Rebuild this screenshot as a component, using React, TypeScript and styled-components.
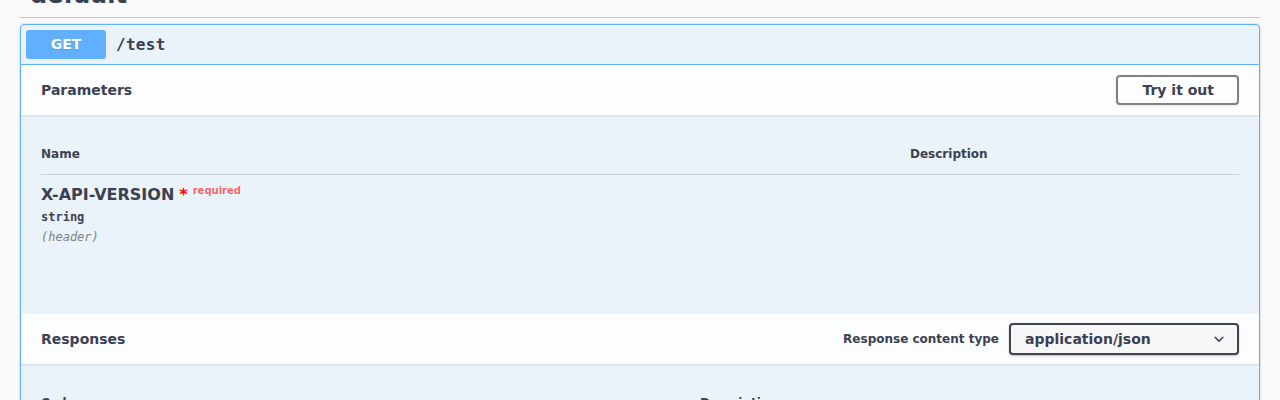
import React from "react";
import styled, { createGlobalStyle } from "styled-components";

const GlobalStyle = createGlobalStyle`
  html, body {
    margin: 0;
    padding: 0;
    background: #fafafa;
    overflow: hidden;
  }
  body {
    font-family: "DejaVu Sans", sans-serif;
    color: #3b4151;
  }
`;

const Wrapper = styled.div`
  padding: 0 20px;
  margin-top: -30px;
`;

const TagHeading = styled.h3`
  margin: 0 0 6px;
  padding: 10px 20px 7px 10px;
  font-size: 24px;
  line-height: 30px;
  font-weight: 700;
  color: #3b4151;
  border-bottom: 1px solid rgba(59, 65, 81, 0.3);
`;

const Opblock = styled.div`
  border: 1px solid #61affe;
  border-radius: 4px;
  background: rgba(97, 175, 254, 0.1);
  box-shadow: 0 0 3px rgba(0, 0, 0, 0.19);
  margin-bottom: 15px;
`;

const Summary = styled.div`
  display: flex;
  align-items: center;
  padding: 5px;
  border-bottom: 1px solid #61affe;
`;

const Method = styled.span`
  min-width: 80px;
  padding: 6px 0;
  border-radius: 3px;
  background: #61affe;
  color: #fff;
  font-size: 14px;
  line-height: 17px;
  font-weight: 700;
  text-align: center;
  text-shadow: 0 1px 0 rgba(0, 0, 0, 0.1);
`;

const Path = styled.span`
  padding: 0 10px;
  font-family: "DejaVu Sans Mono", monospace;
  font-size: 16px;
  font-weight: 700;
  letter-spacing: 0.3px;
  color: #3b4151;
`;

const SectionHeader = styled.div`
  display: flex;
  align-items: center;
  justify-content: space-between;
  min-height: 50px;
  box-sizing: border-box;
  padding: 8px 20px;
  background: rgba(255, 255, 255, 0.8);
  box-shadow: 0 1px 2px rgba(0, 0, 0, 0.1);
`;

const SectionTitle = styled.h4`
  margin: 0;
  font-size: 14px;
  font-weight: 700;
  color: #3b4151;
`;

const TryButton = styled.button`
  font-family: "DejaVu Sans", sans-serif;
  font-size: 14px;
  font-weight: 700;
  color: #3b4151;
  background: transparent;
  border: 2px solid gray;
  border-radius: 4px;
  padding: 5px 23px 5px 24px;
  box-shadow: 0 1px 2px rgba(0, 0, 0, 0.1);
`;

const TableWrap = styled.div<{ $bottom: number }>`
  padding: 20px 20px ${(p) => p.$bottom}px;
`;

const HeadRow = styled.div<{ $first: number }>`
  display: grid;
  grid-template-columns: ${(p) => p.$first}px 1fr;
  border-bottom: 1px solid rgba(59, 65, 81, 0.2);
`;

const HeadCell = styled.div`
  padding: 12px 0;
  font-size: 12px;
  line-height: 15px;
  font-weight: 700;
  color: #3b4151;
`;

const ParamRow = styled.div`
  display: grid;
  grid-template-columns: 869px 1fr;
  padding-top: 10px;
`;

const ParamName = styled.div`
  font-size: 16px;
  line-height: 19px;
  font-weight: 700;
  color: #3b4151;
`;

const Star = styled.span`
  color: red;
  padding-left: 5px;
`;

const Required = styled.span`
  color: rgba(255, 0, 0, 0.6);
  font-size: 10px;
  font-weight: 700;
  padding: 5px;
  position: relative;
  top: -6px;
`;

const ParamType = styled.div`
  padding: 4px 0 0;
  font-family: "DejaVu Sans Mono", monospace;
  font-size: 12px;
  line-height: 15px;
  font-weight: 600;
  color: #3b4151;
`;

const ParamIn = styled.div`
  padding-top: 5px;
  font-family: "DejaVu Sans Mono", monospace;
  font-size: 12px;
  line-height: 15px;
  font-style: italic;
  color: gray;
`;

const ContentType = styled.div`
  display: flex;
  align-items: center;
  gap: 10px;
`;

const Label = styled.span`
  font-size: 12px;
  font-weight: 700;
  color: #3b4151;
`;

const Select = styled.div`
  display: flex;
  align-items: center;
  justify-content: space-between;
  width: 230px;
  height: 32px;
  box-sizing: border-box;
  padding: 0 14px;
  background: #f7f7f7;
  border: 2px solid #41444e;
  border-radius: 4px;
  box-shadow: 0 1px 2px 0 rgba(0, 0, 0, 0.25);
  font-size: 14px;
  font-weight: 700;
  color: #3b4151;
`;

const Chevron = () => (
  <svg width="20" height="20" viewBox="0 0 20 20" style={{ marginRight: -6 }}>
    <path
      fill="#3b4151"
      d="M13.418 7.859a.695.695 0 01.978 0 .68.68 0 010 .969l-3.908 3.83a.697.697 0 01-.979 0l-3.908-3.83a.68.68 0 010-.969.695.695 0 01.978 0L10 11l3.418-3.141z"
    />
  </svg>
);

export default function App() {
  return (
    <Wrapper>
      <GlobalStyle />
      <TagHeading>default</TagHeading>
      <Opblock>
        <Summary>
          <Method>GET</Method>
          <Path>/test</Path>
        </Summary>

        <SectionHeader>
          <SectionTitle>Parameters</SectionTitle>
          <TryButton>Try it out</TryButton>
        </SectionHeader>

        <TableWrap $bottom={69}>
          <HeadRow $first={869}>
            <HeadCell>Name</HeadCell>
            <HeadCell>Description</HeadCell>
          </HeadRow>
          <ParamRow>
            <div>
              <ParamName>
                X-API-VERSION<Star>*</Star>
                <Required>required</Required>
              </ParamName>
              <ParamType>string</ParamType>
              <ParamIn>(header)</ParamIn>
            </div>
            <div />
          </ParamRow>
        </TableWrap>

        <SectionHeader>
          <SectionTitle>Responses</SectionTitle>
          <ContentType>
            <Label>Response content type</Label>
            <Select>
              <span>application/json</span>
              <Chevron />
            </Select>
          </ContentType>
        </SectionHeader>

        <TableWrap $bottom={20}>
          <HeadRow $first={659}>
            <HeadCell>Code</HeadCell>
            <HeadCell>Description</HeadCell>
          </HeadRow>
        </TableWrap>
      </Opblock>
    </Wrapper>
  );
}
